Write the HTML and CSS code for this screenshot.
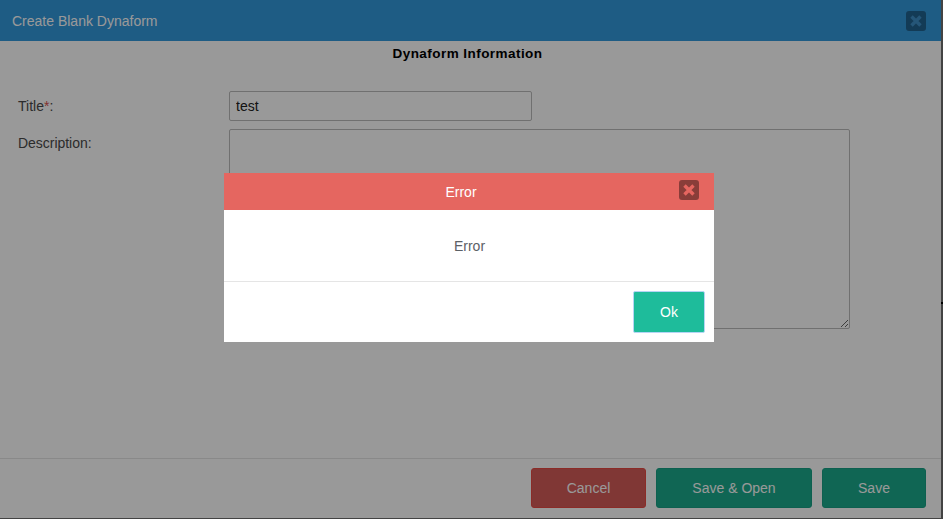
FILE: index.html
```html
<!DOCTYPE html>
<html lang="en">
<head>
    <meta charset="UTF-8">
    <meta name="viewport" content="width=device-width, initial-scale=1.0">
    <title>Create Blank Dynaform</title>
    <link rel="stylesheet" href="styles.css">
</head>
<body>
    <div class="window">
        <div class="window-header">
            <span class="window-title">Create Blank Dynaform</span>
            <button class="close-btn">
                <svg width="14" height="14" viewBox="0 0 14 14"><path d="M2.5 2.5L11.5 11.5M11.5 2.5L2.5 11.5"/></svg>
            </button>
        </div>
        <div class="window-body">
            <h2 class="section-title">Dynaform Information</h2>
            <div class="form-row">
                <label class="form-label">Title<span class="required">*</span>:</label>
                <input class="text-input" type="text" value="test">
            </div>
            <div class="form-row">
                <label class="form-label label-area">Description:</label>
                <textarea class="text-area"></textarea>
            </div>
        </div>
        <div class="window-footer">
            <button class="btn btn-cancel">Cancel</button>
            <button class="btn btn-save btn-open">Save &amp; Open</button>
            <button class="btn btn-save btn-plain">Save</button>
        </div>
    </div>

    <div class="overlay">
        <div class="modal">
            <div class="modal-header">
                <span class="modal-title">Error</span>
                <button class="close-btn modal-close">
                    <svg width="14" height="14" viewBox="0 0 14 14"><path d="M2.5 2.5L11.5 11.5M11.5 2.5L2.5 11.5"/></svg>
                </button>
            </div>
            <div class="modal-body">Error</div>
            <div class="modal-footer">
                <button class="btn-ok">Ok</button>
            </div>
        </div>
    </div>
</body>
</html>
```

FILE: styles.css
```css
html, body {
    margin: 0;
    height: 519px;
    overflow: hidden;
}
body {
    font-family: "Liberation Sans", Arial, sans-serif;
    font-size: 14px;
    background: linear-gradient(#000, #000) right 302px / 2px 2px no-repeat, #717171;
}
.window {
    width: 941px;
    height: 518px;
    background-color: #fff;
    display: flex;
    flex-direction: column;
}
.window-header {
    height: 41px;
    flex: none;
    background-color: #3399dd;
    color: #fff;
    display: flex;
    align-items: center;
    justify-content: space-between;
    padding: 0 15px 0 12px;
}
.window-title { font-size: 14px; }
.close-btn {
    width: 20px;
    height: 20px;
    padding: 0;
    border: none;
    border-radius: 3px;
    background-color: rgba(0,0,0,0.35);
    display: flex;
    align-items: center;
    justify-content: center;
}
.close-btn svg path {
    stroke: #3f8fc8;
    stroke-width: 3.4;
    fill: none;
}
.window-body {
    flex: 1;
    padding: 0 18px;
}
.section-title {
    margin: 5px 0 30px;
    font-size: 13.5px;
    line-height: 15px;
    font-weight: bold;
    letter-spacing: 0.45px;
    text-align: center;
    color: #000;
    padding-right: 6px;
}
.form-row {
    display: flex;
    align-items: flex-start;
    margin-bottom: 8px;
}
.form-label {
    width: 211px;
    flex: none;
    color: #4a4a4a;
    line-height: 30px;
}
.label-area {
    line-height: 28px;
    letter-spacing: -0.03px;
}
.required { color: #d9534f; }
.text-input {
    width: 303px;
    height: 30px;
    box-sizing: border-box;
    margin: 0;
    padding: 0 6px;
    border: 1px solid #bbb;
    border-radius: 2px;
    font-family: inherit;
    font-size: 14px;
    color: #222;
    background-color: #fff;
}
.text-area {
    width: 621px;
    height: 200px;
    box-sizing: border-box;
    margin: 0;
    border: 1px solid #bbb;
    border-radius: 2px;
    background-color: #fff;
}
.window-footer {
    height: 60px;
    flex: none;
    box-sizing: border-box;
    border-top: 1px solid #e5e5e5;
    padding: 9px 15px 0 0;
    display: flex;
    justify-content: flex-end;
    gap: 10px;
}
.btn {
    height: 40px;
    border-radius: 3px;
    font-family: inherit;
    font-size: 14px;
    color: #fff;
}
.btn-cancel {
    width: 115px;
    background-color: #d65d59;
    border: 1px solid #e84a44;
}
.btn-save {
    background-color: #1bab8c;
    border: 1px solid #18a085;
}
.btn-open { width: 156px; }
.btn-plain { width: 104px; }
.overlay {
    position: absolute;
    top: 0;
    left: 0;
    width: 943px;
    height: 519px;
    background-color: rgba(0,0,0,0.4);
}
.modal {
    width: 490px;
    margin: 173px 0 0 224px;
    background-color: #fff;
}
.modal-header {
    height: 37px;
    background-color: #e56660;
    color: #fff;
    position: relative;
    text-align: center;
    line-height: 38px;
    padding-right: 16px;
}
.modal-close {
    position: absolute;
    top: 7px;
    right: 15px;
    background-color: rgba(0,0,0,0.4);
}
.modal-close svg path { stroke: #e56660; }
.modal-body {
    height: 71px;
    line-height: 72px;
    text-align: center;
    padding-left: 1px;
    color: #5c6066;
    border-bottom: 1px solid #e5e5e5;
}
.modal-footer {
    height: 60px;
    box-sizing: border-box;
    padding: 9px 9px 0 0;
    display: flex;
    justify-content: flex-end;
}
.btn-ok {
    width: 72px;
    height: 42px;
    background-color: #1ebc9b;
    border: 1px solid #b5d5f5;
    border-radius: 2px;
    font-family: inherit;
    font-size: 14px;
    color: #fff;
}
```
